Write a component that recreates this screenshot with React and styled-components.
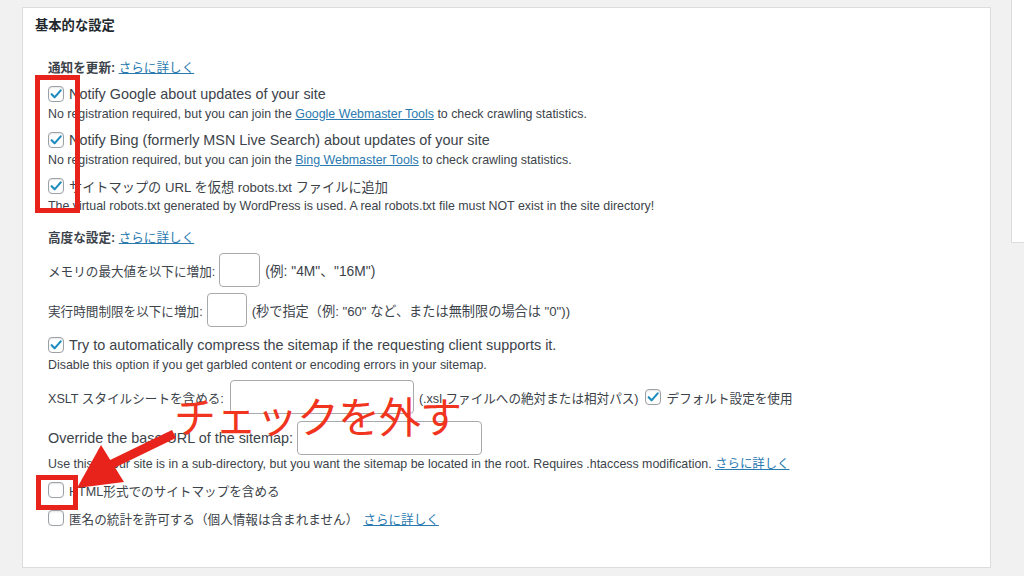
import styled, { createGlobalStyle } from "styled-components";

const GlobalStyle = createGlobalStyle`
  html, body {
    margin: 0;
    padding: 0;
    background: #f1f1f1;
  }
  body {
    font-family: "Liberation Sans", "Noto Sans CJK JP", sans-serif;
    color: #3c434a;
  }
`;

const Page = styled.div`
  position: relative;
  display: flex;
  gap: 20px;
  padding: 7px 0 0 22px;
  height: 576px;
  box-sizing: border-box;
  overflow: hidden;
`;

const Panel = styled.section`
  flex-shrink: 0;
  width: 969px;
  height: 561px;
  box-sizing: border-box;
  background: #fff;
  border: 1px solid #dcdcde;
  padding: 8px 12px 0 12px;
`;

const Side = styled.aside`
  flex-shrink: 0;
  width: 200px;
  height: 243px;
  margin-top: -7px;
  box-sizing: border-box;
  background: #fff;
  border: 1px solid #dcdcde;
  border-top: none;
`;

const Title = styled.h3`
  margin: 0;
  font-size: 13.3px;
  line-height: 20px;
  font-weight: 700;
  color: #23282d;
`;

const Body = styled.div`
  display: flex;
  flex-direction: column;
  gap: 6px;
  padding-left: 13px;
  margin-top: 22px;
`;

const Heading = styled.div`
  font-size: 12.6px;
  line-height: 20px;
  margin-top: ${(p) => p.$gap || 0}px;
  margin-bottom: -1px;

  b {
    font-weight: 700;
    color: #3c434a;
  }
`;

const Link = styled.a`
  color: #2a7ab0;
  text-decoration: underline;
  font-weight: 400;
  cursor: pointer;
`;

const Group = styled.div`
  display: flex;
  flex-direction: column;
  margin-top: ${(p) => p.$mt || 0}px;
  margin-bottom: ${(p) => p.$mb || 0}px;
`;

const CheckLine = styled.label`
  display: flex;
  align-items: center;
  gap: 5px;
  height: 22px;
  font-size: ${(p) => p.$size || 14.4}px;
  white-space: nowrap;
`;

const Box = styled.span`
  flex-shrink: 0;
  display: inline-flex;
  align-items: center;
  justify-content: center;
  width: 16px;
  height: 16px;
  box-sizing: border-box;
  border: 1px solid #9ca1a6;
  border-radius: 4px;
  background: #fff;
  box-shadow: inset 0 1px 2px rgba(0, 0, 0, 0.1);
`;

const Desc = styled.div`
  font-size: 12.4px;
  line-height: 18px;
  color: #3c434a;
  white-space: nowrap;
`;

const FieldRow = styled.div`
  display: flex;
  align-items: center;
  height: 34px;
  font-size: ${(p) => p.$size || 12.6}px;
  white-space: nowrap;
`;

const TextInput = styled.span`
  flex-shrink: 0;
  width: ${(p) => p.$w}px;
  height: 34px;
  box-sizing: border-box;
  margin: 0 5px 0 ${(p) => p.$ml || 4}px;
  border: 1px solid #a7aaad;
  border-radius: 4px;
  background: #fff;
`;

const Note = styled.span`
  display: inline-flex;
  align-items: center;
  gap: 6px;
  font-size: ${(p) => p.$size || 13.2}px;
`;

const Frame = styled.div`
  position: absolute;
  left: ${(p) => p.$x}px;
  top: ${(p) => p.$y}px;
  width: ${(p) => p.$w}px;
  height: ${(p) => p.$h}px;
  box-sizing: border-box;
  border: 5px solid #e8231b;
  pointer-events: none;
`;

const Callout = styled.div`
  position: absolute;
  left: 174px;
  top: 385px;
  font-family: "Noto Sans CJK JP", sans-serif;
  font-size: 42px;
  line-height: 60px;
  font-weight: 400;
  color: #f0341d;
  letter-spacing: -1px;
  white-space: nowrap;
`;

const ArrowSvg = styled.svg`
  position: absolute;
  left: 0;
  top: 0;
  pointer-events: none;
`;

const Check = ({ on }) => (
  <Box>
    {on && (
      <svg width="14" height="14" viewBox="0 0 16 16">
        <path
          d="M3 8.2l3.4 3.6L13.4 3.8"
          fill="none"
          stroke="#1e8cbe"
          strokeWidth="2.4"
          strokeLinecap="round"
          strokeLinejoin="round"
        />
      </svg>
    )}
  </Box>
);

export default function App() {
  return (
    <>
      <GlobalStyle />
      <Page>
        <Panel>
          <Title>基本的な設定</Title>
          <Body>
            <Heading>
              <b>通知を更新:</b> <Link>さらに詳しく</Link>
            </Heading>
            <Group>
              <CheckLine>
                <Check on />
                Notify Google about updates of your site
              </CheckLine>
              <Desc>
                No registration required, but you can join the <Link>Google Webmaster Tools</Link> to check crawling statistics.
              </Desc>
            </Group>
            <Group>
              <CheckLine>
                <Check on />
                Notify Bing (formerly MSN Live Search) about updates of your site
              </CheckLine>
              <Desc>
                No registration required, but you can join the <Link>Bing Webmaster Tools</Link> to check crawling statistics.
              </Desc>
            </Group>
            <Group>
              <CheckLine $size={13.2}>
                <Check on />
                サイトマップの URL を仮想 robots.txt ファイルに追加
              </CheckLine>
              <Desc>
                The virtual robots.txt generated by WordPress is used. A real robots.txt file must NOT exist in the site directory!
              </Desc>
            </Group>

            <Heading $gap={7}>
              <b>高度な設定:</b> <Link>さらに詳しく</Link>
            </Heading>
            <FieldRow>
              メモリの最大値を以下に増加:
              <TextInput $w={41} />
              <Note $size={13.8}>(例: "4M"、"16M")</Note>
            </FieldRow>
            <FieldRow>
              実行時間制限を以下に増加:
              <TextInput $w={40} />
              <Note>(秒で指定（例: "60" など、または無制限の場合は "0"))</Note>
            </FieldRow>
            <Group $mt={1}>
              <CheckLine>
                <Check on />
                Try to automatically compress the sitemap if the requesting client supports it.
              </CheckLine>
              <Desc>Disable this option if you get garbled content or encoding errors in your sitemap.</Desc>
            </Group>
            <FieldRow>
              XSLT スタイルシートを含める:
              <TextInput $w={184} $ml={6} />
              <Note $size={12.6}>
                (.xsl ファイルへの絶対または相対パス)
                <Check on />
                デフォルト設定を使用
              </Note>
            </FieldRow>
            <Group $mt={1}>
              <FieldRow $size={14.4}>
                Override the base URL of the sitemap:
                <TextInput $w={185} />
              </FieldRow>
              <Desc>
                Use this if your site is in a sub-directory, but you want the sitemap be located in the root. Requires .htaccess modification. <Link>さらに詳しく</Link>
              </Desc>
            </Group>
            <CheckLine $size={12.6}>
              <Check />
              HTML形式でのサイトマップを含める
            </CheckLine>
            <CheckLine $size={12.6}>
              <Check />
              匿名の統計を許可する（個人情報は含まれません） <Link>さらに詳しく</Link>
            </CheckLine>
          </Body>
        </Panel>
        <Side />

        <Frame $x={35} $y={75} $w={45} $h={138} />
        <Frame $x={36} $y={475} $w={42} $h={35} />
        <Callout>チェックを外す</Callout>
        <ArrowSvg width="1024" height="576">
          <line x1="174" y1="434" x2="110" y2="465" stroke="#e8231b" strokeWidth="9" />
          <polygon points="77,488 101,445 124,482" fill="#e8231b" />
        </ArrowSvg>
      </Page>
    </>
  );
}
